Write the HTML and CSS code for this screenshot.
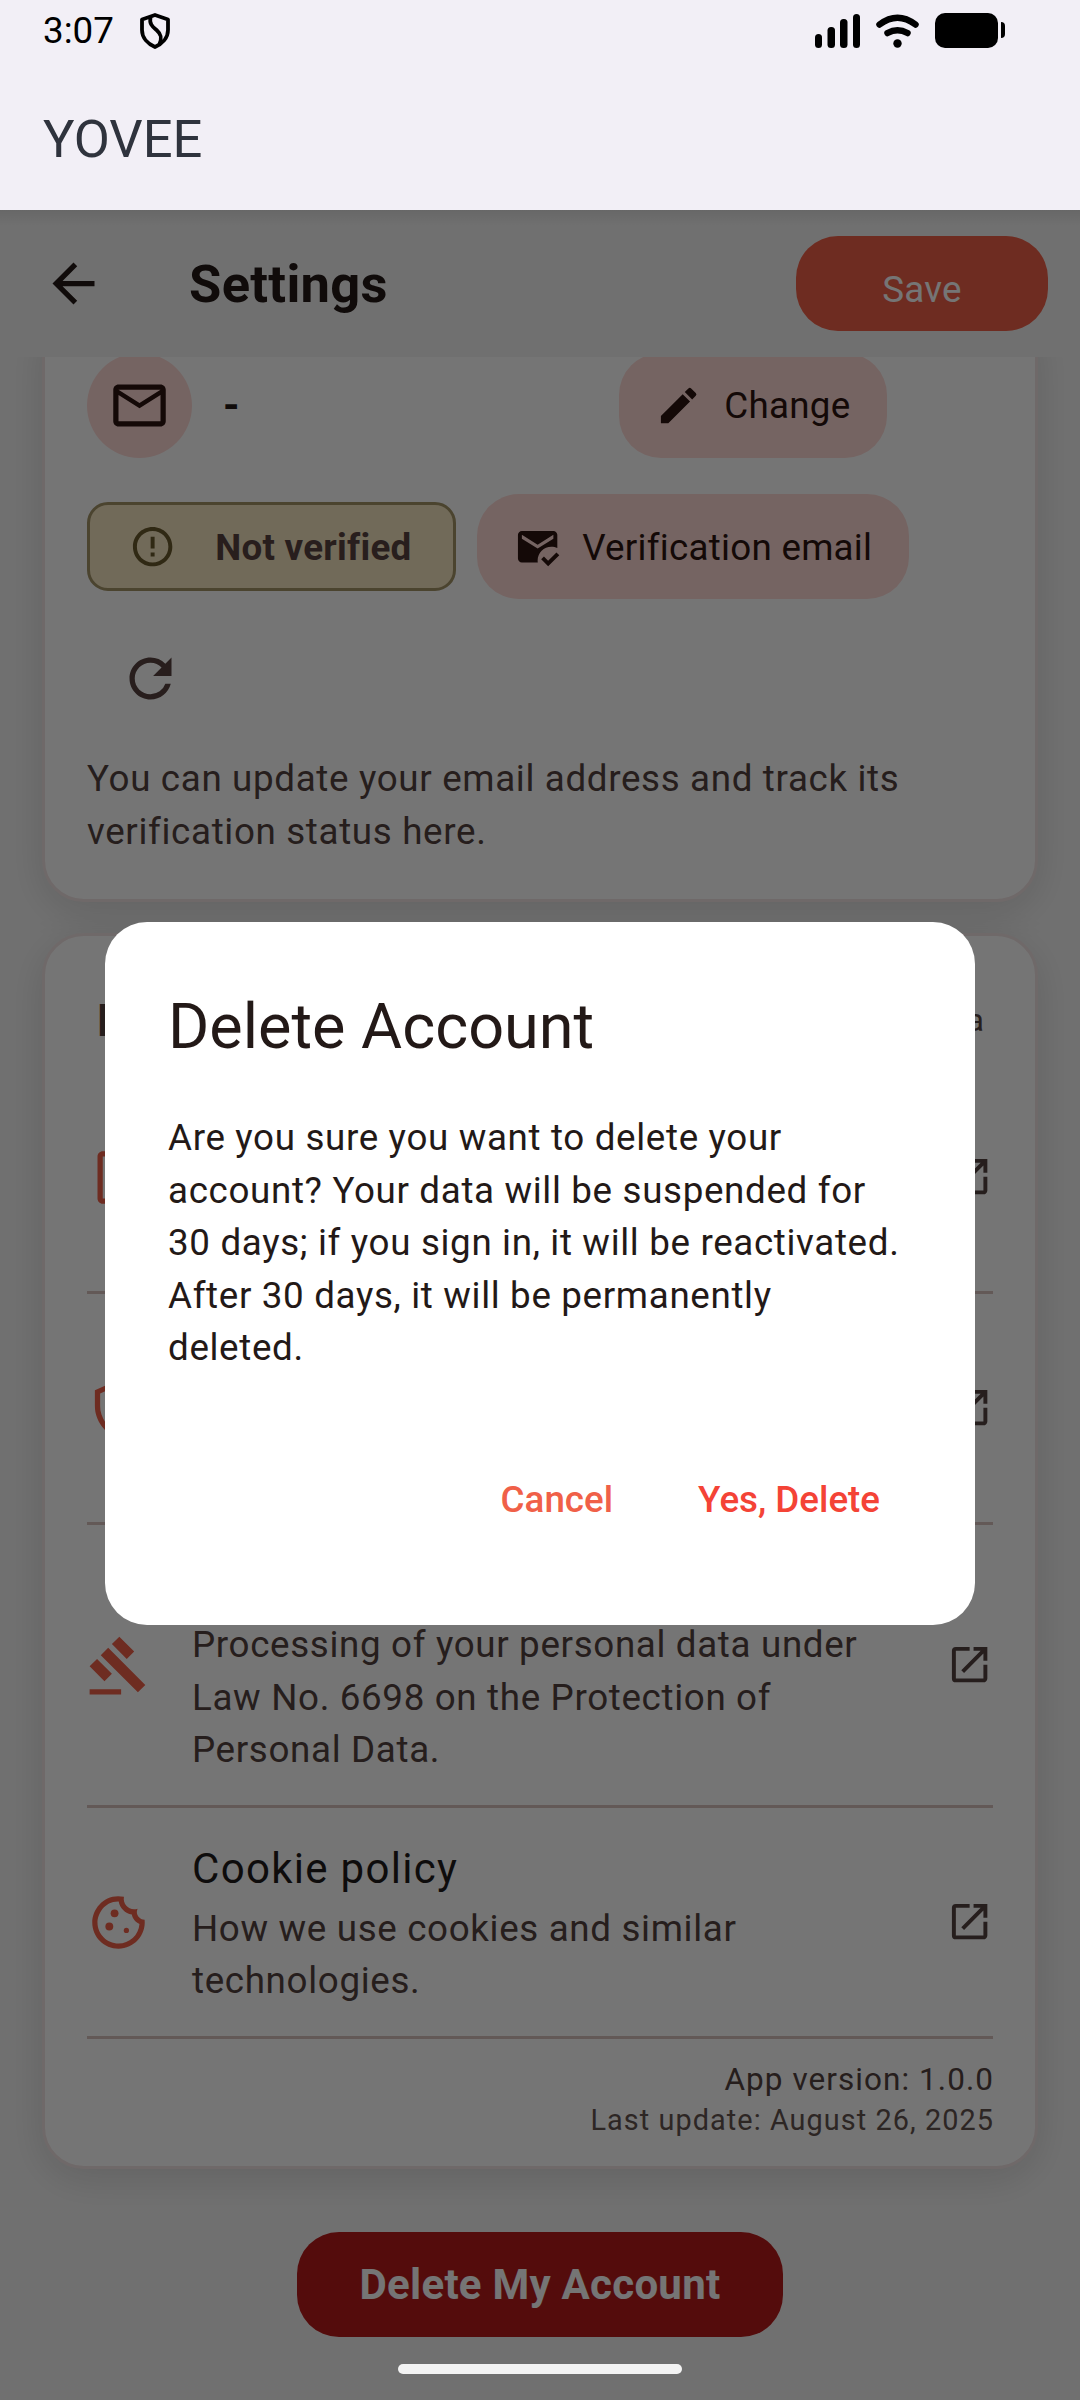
FILE: index.html
```html
<!DOCTYPE html>
<html lang="en">
<head>
<meta charset="utf-8">
<title>YOVEE – Settings</title>
<link rel="stylesheet" href="styles.css">
</head>
<body>
<header class="top">
  <div class="status">
    <span class="clock">3:07</span>
    <svg class="vpn" viewBox="0 0 30 36"><path d="M15 2 28 6.500V17C28 25 22 31 15 34 8 31 2 25 2 17V6.500Z" fill="none" stroke="#000" stroke-width="3.800" stroke-linejoin="round"/><path d="M10.500 4C9 11.500 13 14 17 17.500 21.500 21.500 22 25 19.500 31" fill="none" stroke="#000" stroke-width="3.800"/></svg>
    <svg class="system" viewBox="0 0 190 36"><rect x="0" y="21" width="7" height="14" rx="3.500"/><rect x="12.500" y="14" width="7.500" height="21" rx="3.500"/><rect x="25" y="6" width="7.500" height="29" rx="3.500"/><rect x="38" y="1" width="7" height="34" rx="3.500"/><g fill="none" stroke="#000" stroke-linecap="round"><path d="M64.500 11.500Q82.500-2 100.500 11.500" stroke-width="6.500"/><path d="M72.500 20Q82.500 14.500 92.500 20" stroke-width="6.500"/></g><circle cx="82.500" cy="30.500" r="4.200"/><rect x="120" y="0" width="63" height="35" rx="10"/><path d="M186 9q4 0 4 4v8q0 4-4 4z"/></svg>
  </div>
  <h1 class="brand">YOVEE</h1>
</header>

<main class="screen">
  <div class="appbar">
    <svg class="icon" viewBox="0 0 24 24"><path d="M20 11H7.830l5.590-5.590L12 4l-8 8 8 8 1.410-1.410L7.830 13H20v-2z"/></svg>
    <h2 class="appbar-title">Settings</h2>
    <button class="save">Save</button>
  </div>

  <div class="scroll">
    <section class="card email">
      <div class="email-row">
        <span class="avatar"><svg class="icon" viewBox="0 0 24 24"><path d="M20 4H4c-1.100 0-1.990.9-1.990 2L2 18c0 1.100.9 2 2 2h16c1.100 0 2-.9 2-2V6c0-1.100-.9-2-2-2zm0 14H4V8l8 5 8-5v10zm-8-7L4 6h16l-8 5z"/></svg></span>
        <span class="address">-</span>
        <button class="tonal change"><svg class="icon-s" viewBox="0 0 24 24"><path d="M3 17.250V21h3.750L17.810 9.940l-3.750-3.750L3 17.250zM20.710 7.040a.996.996 0 0 0 0-1.410l-2.340-2.340a.996.996 0 0 0-1.410 0l-1.830 1.830 3.750 3.750 1.830-1.830z"/></svg>Change</button>
      </div>
      <div class="verify-row">
        <span class="chip"><svg class="icon-s" viewBox="0 0 24 24"><path d="M11 15h2v2h-2zm0-8h2v6h-2zm.99-5C6.470 2 2 6.480 2 12s4.470 10 9.990 10C17.520 22 22 17.520 22 12S17.520 2 11.990 2zM12 20c-4.420 0-8-3.580-8-8s3.580-8 8-8 8 3.580 8 8-3.580 8-8 8z"/></svg>Not verified</span>
        <button class="tonal verification"><svg class="icon-s" viewBox="0 0 24 24"><path d="M12 19c0-3.870 3.130-7 7-7 1.080 0 2.090.25 3 .68V6c0-1.100-.9-2-2-2H4c-1.100 0-2 .9-2 2v12c0 1.100.9 2 2 2h8.080c-.05-.33-.08-.66-.08-1zM4 6l8 5 8-5v2l-8 5-8-5V6zm13.340 16-3.540-3.540 1.410-1.410 2.120 2.120 4.240-4.240L23 16.340 17.340 22z"/></svg>Verification email</button>
      </div>
      <span class="refresh"><svg class="icon" viewBox="0 0 24 24"><path d="M17.650 6.350A7.958 7.958 0 0 0 12 4c-4.420 0-7.990 3.580-7.990 8s3.570 8 7.990 8c3.730 0 6.840-2.550 7.730-6h-2.080A5.990 5.990 0 0 1 12 18c-3.310 0-6-2.690-6-6s2.690-6 6-6c1.660 0 3.140.69 4.220 1.780L13 11h7V4l-2.350 2.350z"/></svg></span>
      <p class="body">You can update your email address and track its<br>verification status here.</p>
    </section>

    <section class="card legal">
      <div class="legal-head"><strong>Legal</strong><small>KVKK &amp; Data</small></div>
      <div class="item">
        <svg class="icon" viewBox="0 0 24 24"><path d="M8 16h8v2H8zm0-4h8v2H8zm6-10H6c-1.100 0-2 .9-2 2v16c0 1.100.89 2 1.990 2H18c1.100 0 2-.9 2-2V8l-6-6zm4 18H6V4h7v5h5v11z"/></svg>
        <div></div>
        <svg class="icon-s open" viewBox="0 0 24 24"><path d="M19 19H5V5h7V3H5a2 2 0 0 0-2 2v14a2 2 0 0 0 2 2h14c1.100 0 2-.9 2-2v-7h-2v7zM14 3v2h3.590l-9.830 9.830 1.410 1.410L19 6.410V10h2V3h-7z"/></svg>
      </div>
      <div class="item">
        <svg class="icon" viewBox="0 0 24 24"><path d="M12 1 3 5v6c0 5.550 3.840 10.740 9 12 5.160-1.260 9-6.450 9-12V5l-9-4zm0 2.190 7 3.110V11c0 4.520-2.980 8.690-7 9.930C7.980 19.690 5 15.520 5 11V6.300l7-3.110z"/></svg>
        <div></div>
        <svg class="icon-s open" viewBox="0 0 24 24"><path d="M19 19H5V5h7V3H5a2 2 0 0 0-2 2v14a2 2 0 0 0 2 2h14c1.100 0 2-.9 2-2v-7h-2v7zM14 3v2h3.590l-9.830 9.830 1.410 1.410L19 6.410V10h2V3h-7z"/></svg>
      </div>
      <div class="item tall">
        <svg class="icon" viewBox="0 0 24 24"><path d="M1 21h12v2H1zM5.245 8.070l2.830-2.827 14.140 14.142-2.828 2.828zM12.317 1l5.657 5.656-2.830 2.830-5.654-5.660zM3.825 9.485l5.657 5.657-2.828 2.828-5.657-5.657z"/></svg>
        <div><h3></h3><p class="body">Processing of your personal data under<br>Law No. 6698 on the Protection of<br>Personal Data.</p></div>
        <svg class="icon-s open" viewBox="0 0 24 24"><path d="M19 19H5V5h7V3H5a2 2 0 0 0-2 2v14a2 2 0 0 0 2 2h14c1.100 0 2-.9 2-2v-7h-2v7zM14 3v2h3.590l-9.830 9.830 1.410 1.410L19 6.410V10h2V3h-7z"/></svg>
      </div>
      <div class="item">
        <svg class="icon" viewBox="0 0 24 24"><circle cx="10.500" cy="8.500" r="1.500"/><circle cx="8.500" cy="13.500" r="1.500"/><circle cx="15" cy="15" r="1"/><path d="M21.950 10.990c-1.790-.03-3.700-1.950-2.680-4.220-2.980 1-5.770-1.590-5.190-4.560C6.950.71 2 6.580 2 12c0 5.520 4.480 10 10 10 5.890 0 10.540-5.080 9.950-11.010zM12 20c-4.410 0-8-3.590-8-8 0-3.310 2.730-8.180 8.080-8.020.42 2.540 2.440 4.560 4.990 4.940.07.36.52 2.550 2.920 3.630C19.700 16.860 16.060 20 12 20z"/></svg>
        <div><h3>Cookie policy</h3><p class="body">How we use cookies and similar<br>technologies.</p></div>
        <svg class="icon-s open" viewBox="0 0 24 24"><path d="M19 19H5V5h7V3H5a2 2 0 0 0-2 2v14a2 2 0 0 0 2 2h14c1.100 0 2-.9 2-2v-7h-2v7zM14 3v2h3.590l-9.830 9.830 1.410 1.410L19 6.410V10h2V3h-7z"/></svg>
      </div>
      <p class="version">App version: 1.0.0</p>
      <p class="updated">Last update: August 26, 2025</p>
    </section>

    <button class="delete">Delete My Account</button>
  </div>

  <div class="scrim"></div>
  <div class="dialog" role="dialog">
    <h2>Delete Account</h2>
    <p>Are you sure you want to delete your<br>account? Your data will be suspended for<br>30 days; if you sign in, it will be reactivated.<br>After 30 days, it will be permanently<br>deleted.</p>
    <div class="actions"><button class="cancel">Cancel</button><button class="confirm">Yes, Delete</button></div>
  </div>
  <div class="homebar"></div>
</main>
</body>
</html>
```
FILE: styles.css
```css
* { box-sizing: border-box; margin: 0; padding: 0; }
body { width: 1080px; height: 2400px; overflow: hidden; font-family: Roboto, sans-serif; font-size: 36.75px; color: #231917; background: #f5f5f5; }
button { border: 0; background: none; font: inherit; color: inherit; }
svg { display: block; flex: none; fill: currentColor; }
.icon { width: 63px; height: 63px; }
.icon-s { width: 47.25px; height: 47.25px; }

.top { height: 210px; background: #f2eff6; }
.status { height: 62px; padding: 0 75px 0 43px; display: flex; align-items: center; color: #000; }
.clock { line-height: 60px; }
.vpn { width: 30px; height: 36px; margin-left: 26px; }
.system { width: 190px; height: 36px; margin-left: auto; }
.brand { padding-left: 43px; font-size: 52.5px; font-weight: 400; line-height: 154px; color: #2f333d; }

.screen { position: relative; height: 2190px; overflow: hidden; display: flex; flex-direction: column; background: #f5f5f5; }
.appbar { height: 147px; flex: none; padding: 0 32px 0 42px; display: flex; align-items: center; }
.appbar-title { margin-left: 84px; font-size: 52.5px; font-weight: 700; line-height: 62px; letter-spacing: .300px; }
.save { width: 252px; height: 95px; margin-left: auto; padding-top: 12px; border-radius: 42px; background: #f06048; color: #fff; letter-spacing: .260px; }

.scroll { height: 2043px; overflow: hidden; padding: 0 42px; }
.card { border: 3px solid #f2e5e5; border-radius: 42px; background: #fff; box-shadow: 0 10px 42px rgba(0,0,0,.12); padding: 42px; }
.email { margin-top: -50px; height: 595px; padding-top: 43px; }
.email-row { height: 105px; display: flex; align-items: center; }
.avatar { width: 105px; height: 105px; border-radius: 50%; background: #ffdad6; display: flex; align-items: center; justify-content: center; color: #2c1410; }
.address { flex: 1; margin-left: 31px; font-size: 42px; font-weight: 700; }
.tonal { height: 105px; border-radius: 42px; background: #ffdad6; color: #2c1410; display: flex; align-items: center; letter-spacing: .260px; }
.change { width: 268px; margin-right: 106px; padding-left: 36px; gap: 22px; }
.verify-row { margin-top: 36px; display: flex; align-items: center; gap: 21px; }
.chip { width: 369px; height: 89px; padding: 1px 0 0 39px; border: 3px solid #a39468; border-radius: 21px; background: #f6e6c2; display: flex; align-items: center; gap: 39px; font-weight: 700; color: #574340; letter-spacing: .260px; }
.chip svg { color: #69592c; }
.verification { width: 432px; padding: 1px 0 0 37px; gap: 21px; }
.refresh { width: 126px; height: 126px; margin-top: 16px; display: flex; align-items: center; justify-content: center; color: #574340; }
.body { line-height: 52.5px; color: #534340; letter-spacing: .656px; }
.email .body { margin-top: 12px; }

.legal { margin-top: 31px; height: 1236px; padding-top: 44px; }
.legal-head { height: 80px; margin-bottom: 3px; padding: 0 9px 0 10px; display: flex; align-items: center; justify-content: space-between; color: #534340; }
.legal-head strong { font-size: 45px; }
.legal-head small { font-size: 31.5px; }
.item { height: 231px; border-bottom: 3px solid #d8c2be; display: grid; grid-template-columns: 63px 1fr 47.25px; column-gap: 42px; align-items: center; color: #f06048; }
.tall { height: 283px; }
.item h3 { height: 61px; font-size: 42px; font-weight: 400; line-height: 61px; color: #1f1c1b; letter-spacing: 1.300px; }
.item .body { margin: 4px 0 -1px; }
.open { color: #534340; }
.version, .updated { height: 41px; margin-right: -1px; line-height: 41px; text-align: right; color: #534340; letter-spacing: 1.050px; }
.version { margin-top: 20px; font-size: 31.5px; }
.updated { font-size: 28.875px; color: #635350; }
.delete { display: flex; align-items: center; justify-content: center; width: 486px; height: 105px; margin: 63px auto 0; border-radius: 42px; background: #b71c1c; color: #fff; font-size: 42px; font-weight: 700; letter-spacing: .260px; }

.scrim { position: absolute; inset: 0; background: linear-gradient(rgba(0,0,0,.08), transparent 16px), rgba(0,0,0,.54); }
.dialog { position: absolute; left: 105px; top: 712px; width: 870px; height: 703px; padding: 63px; border-radius: 42px; background: #fff; }
.dialog h2 { font-size: 63px; font-weight: 400; line-height: 84px; }
.dialog p { margin-top: 43px; line-height: 52.5px; letter-spacing: .656px; }
.actions { margin-top: 62px; display: flex; justify-content: flex-end; gap: 21px; font-weight: 500; line-height: 126px; letter-spacing: .100px; }
.cancel { padding: 0 32px; color: #f06048; }
.confirm { padding: 0 32px; color: #f44336; }
.homebar { position: absolute; left: 398px; top: 2154px; width: 284px; height: 10px; border-radius: 5px; background: #f3f3f3; }
```
